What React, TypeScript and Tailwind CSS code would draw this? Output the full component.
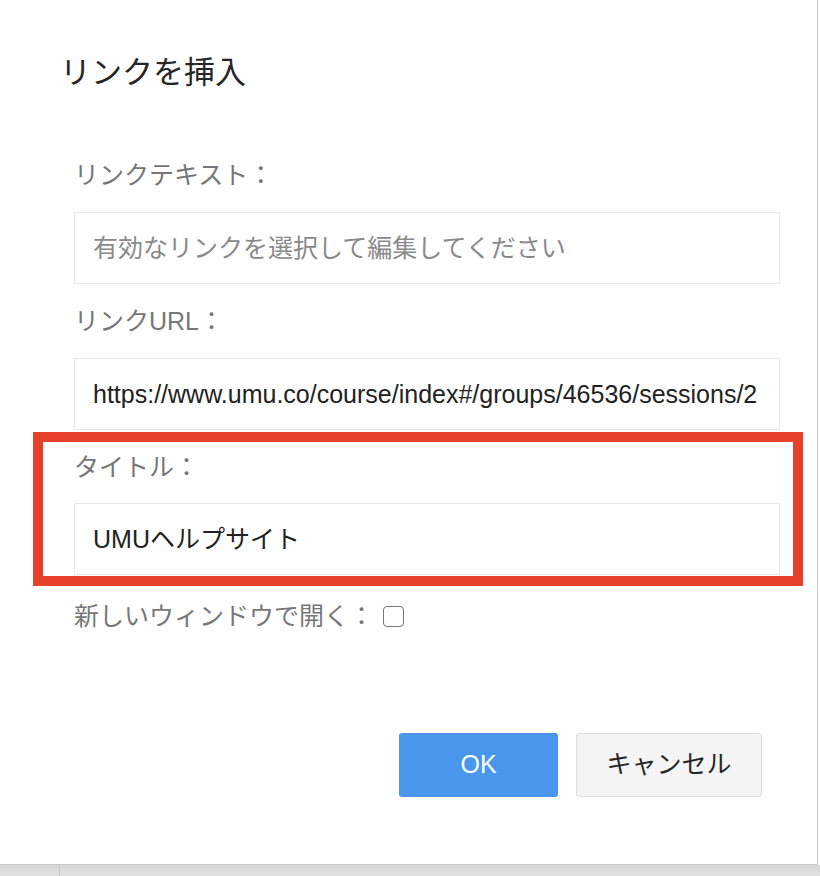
import React from "react";

const font = "font-['Liberation_Sans','Noto_Sans_CJK_JP',sans-serif]";

function Label({ children, h = "h-[74px]" }: { children: React.ReactNode; h?: string }) {
  return (
    <div className={`${h} flex items-center text-[25px] leading-[30px] text-[#777777]`}>{children}</div>
  );
}

function Field({ children, muted = false }: { children: React.ReactNode; muted?: boolean }) {
  return (
    <div
      className={`h-[72px] w-[706px] border border-[#e8e8e8] bg-white pl-[18px] flex items-center overflow-hidden whitespace-nowrap text-[25px] leading-[30px] ${
        muted ? "text-[#8a8a8a]" : "text-[#222222]"
      }`}
    >
      {children}
    </div>
  );
}

export default function App() {
  return (
    <div className={`relative w-[820px] h-[876px] bg-white ${font} overflow-hidden`}>
      <div className="w-[818px] h-[865px] bg-white border-r border-b border-[#c9c9c9] flex flex-col">
        <div className="h-[139px] pt-[53px] pl-[60px] text-[31px] leading-[40px] text-[#262626]">リンクを挿入</div>
        <div className="pl-[74px] flex flex-col">
          <Label h="h-[74px] -mt-[1px]">リンクテキスト：</Label>
          <Field muted>有効なリンクを選択して編集してください</Field>
          <Label>リンクURL：</Label>
          <Field>https://www.umu.co/course/index#/groups/46536/sessions/2</Field>
          <Label h="h-[73px]">タイトル：</Label>
          <Field>UMUヘルプサイト</Field>
          <div className="h-[82px] flex items-center text-[25px] leading-[30px] text-[#777777]">
            <span>新しいウィンドウで開く：</span>
            <span className="ml-[9px] inline-block w-[21px] h-[21px] rounded-[4px] border-[1.5px] border-[#767676] bg-white" />
          </div>
        </div>
        <div className="mt-[76px] pl-[399px] flex gap-[18px]">
          <div className="w-[159px] h-[64px] rounded-[3px] bg-[#4a96ec] text-white text-[25px] flex items-center justify-center">
            OK
          </div>
          <div className="w-[186px] h-[64px] rounded-[3px] bg-[#f4f4f4] border border-[#dddddd] text-[#262626] text-[25px] flex items-center justify-center">
            キャンセル
          </div>
        </div>
      </div>
      <div className="h-[11px] flex bg-gradient-to-b from-[#d6d6d6] to-[#e2e2e2]">
        <div className="w-[60px] h-full border-r border-[#c4c4c4]" />
        <div className="flex-1" />
      </div>
      <div className="absolute left-[33px] top-[432px] w-[770px] h-[154px] border-[10px] border-[#e8412b]" />
    </div>
  );
}
